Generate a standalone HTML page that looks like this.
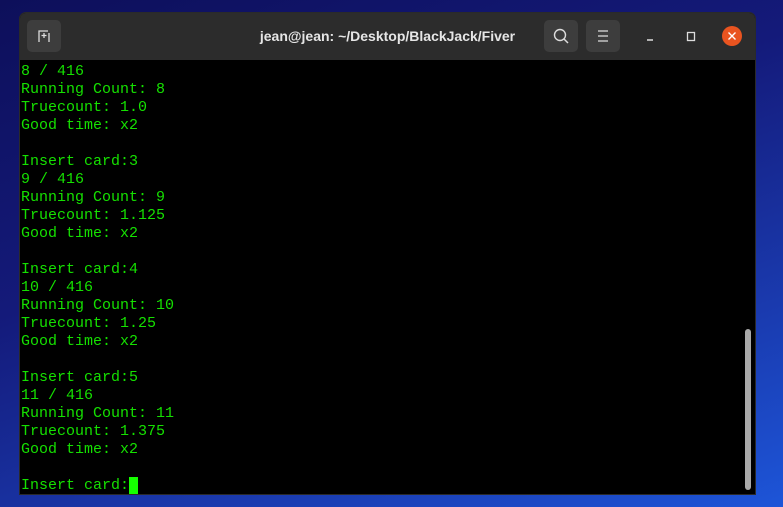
<!DOCTYPE html>
<html><head><style>
html,body{margin:0;padding:0;width:783px;height:507px;overflow:hidden;
background:linear-gradient(160deg,#0d0f5a 0%,#141a7a 40%,#1a3bb0 75%,#1d55d8 100%);font-family:"Liberation Sans",sans-serif}
.win{position:absolute;left:20px;top:13px;width:735px;height:481px;background:#000;border-radius:6px 6px 0 0;overflow:hidden;box-shadow:0 0 0 1px #2a2a2a}
.tb{position:absolute;left:0;top:0;width:735px;height:47px;background:#2c2c2c}
.btn{position:absolute;top:7px;width:34px;height:32px;background:#3d3d3d;border-radius:5px}
.title{position:absolute;left:0;right:0;top:15px;text-align:center;color:#e6e6e6;font-weight:bold;font-size:14px}
.term{position:absolute;left:1px;top:50px;color:#15e000;font-family:"Liberation Mono",monospace;font-size:15px;line-height:18px;white-space:pre}
.cur{display:inline-block;width:9px;height:18px;background:#15ff00;vertical-align:top}
.sb{position:absolute;left:725px;top:316px;width:6px;height:161px;background:#a9a9a9;border-radius:3px}
</style></head><body>
<div class="win">
<div class="tb">
 <div class="btn" style="left:7px"><svg width="34" height="32"><path d="M12 22V11h9M17 13v5M14.5 15.5h5M22 13v9" stroke="#ddd" stroke-width="1.3" fill="none"/></svg></div>
 <div class="title">jean@jean: ~/Desktop/BlackJack/Fiver</div>
 <div class="btn" style="left:524px"><svg width="34" height="32"><circle cx="16" cy="15" r="5.5" stroke="#ddd" stroke-width="1.4" fill="none"/><path d="M20 19l4 4" stroke="#ddd" stroke-width="1.5"/></svg></div>
 <div class="btn" style="left:566px"><svg width="34" height="32"><path d="M12 11h10M12 16h10M12 21h10" stroke="#ddd" stroke-width="1.3"/></svg></div>
 <svg style="position:absolute;left:624px;top:12px" width="100" height="24"><path d="M3 15h6" stroke="#ddd" stroke-width="1.4"/><rect x="43.5" y="7.5" width="7" height="8" stroke="#ddd" stroke-width="1.3" fill="none"/><circle cx="88" cy="11" r="10" fill="#e95420"/><path d="M84.5 7.5l7 7M91.5 7.5l-7 7" stroke="#fff" stroke-width="1.4"/></svg>
</div>
<div class="term">8 / 416
Running Count: 8
Truecount: 1.0
Good time: x2

Insert card:3
9 / 416
Running Count: 9
Truecount: 1.125
Good time: x2

Insert card:4
10 / 416
Running Count: 10
Truecount: 1.25
Good time: x2

Insert card:5
11 / 416
Running Count: 11
Truecount: 1.375
Good time: x2

Insert card:<span class="cur"></span></div>
<div class="sb"></div>
</div>
</body></html>
